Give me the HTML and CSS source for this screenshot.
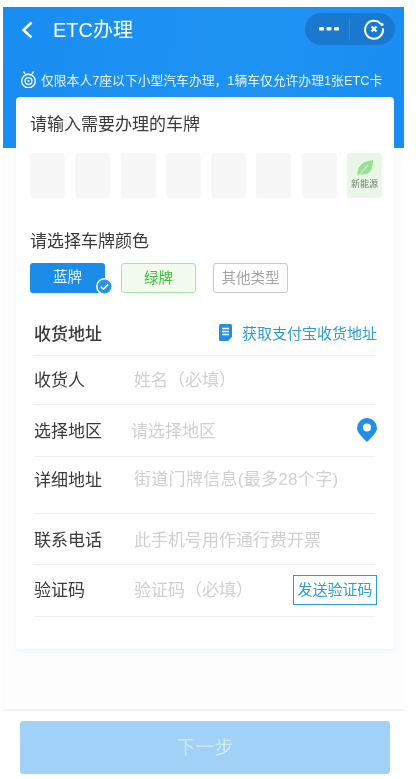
FILE: index.html
```html
<!DOCTYPE html>
<html lang="zh-CN">
<head>
  <meta charset="UTF-8">
  <meta name="viewport" content="width=device-width, initial-scale=1.0">
  <title>ETC办理</title>
  <link rel="stylesheet" href="styles.css">
</head>
<body>
  <div class="app">
    <header class="top">
      <div class="nav">
        <svg class="back" width="12" height="18" viewBox="0 0 12 18"><path d="M10.500 1.500 2.500 9l8 7.500" fill="none" stroke="#fff" stroke-width="2.400"/></svg>
        <span class="nav-title">ETC办理</span>
        <div class="capsule">
          <svg width="20" height="6" viewBox="0 0 20 6" fill="#fff"><rect x="0" y="1" width="5" height="3.600" rx="1"/><rect x="7.500" y="1" width="5" height="3.600" rx="1"/><rect x="15" y="1" width="5" height="3.600" rx="1"/></svg>
          <span class="capsule-line"></span>
          <svg width="22" height="22" viewBox="0 0 22 22" fill="none" stroke="#fff"><path d="M17.500 5.500A9 9 0 1 0 20 11" stroke-width="2" stroke-linecap="round"/><circle cx="19" cy="6.500" r="1.500" fill="#fff" stroke="none"/><path d="M8.500 8.500l5 5M13.500 8.500l-5 5" stroke-width="2"/></svg>
        </div>
      </div>
      <div class="notice">
        <svg width="17" height="18" viewBox="0 0 17 18" fill="none" stroke="#fff"><circle cx="8.500" cy="11" r="6.800" stroke-width="1.400"/><circle cx="8.500" cy="11" r="3.400" stroke-width="1.400"/><circle cx="8.500" cy="11" r="1" fill="#fff" stroke="none"/><path d="M5 4 3.500 1.500M12 4l1.500-2.500" stroke-width="1.400"/></svg>
        <span>仅限本人7座以下小型汽车办理，1辆车仅允许办理1张ETC卡</span>
      </div>
    </header>

    <main class="card">
      <h2 class="card-title">请输入需要办理的车牌</h2>
      <div class="plates">
        <div class="plate"></div>
        <div class="plate"></div>
        <div class="plate"></div>
        <div class="plate"></div>
        <div class="plate"></div>
        <div class="plate"></div>
        <div class="plate"></div>
        <div class="plate plate-new">
          <svg width="18" height="18" viewBox="0 0 18 18"><path d="M1.500 17C.5 9 5 2.500 17 1c.5 10-4 15.500-12 14.500z" fill="#9adf95"/><path d="M3 16 12 6" stroke="#e6f7e3" stroke-width="1"/></svg>
          <span>新能源</span>
        </div>
      </div>

      <h3 class="color-title">请选择车牌颜色</h3>
      <div class="chips">
        <div class="chip chip-blue">蓝牌
          <svg class="chip-check" width="17" height="17" viewBox="0 0 17 17"><circle cx="8.500" cy="8.500" r="7.700" fill="#2a93e8" stroke="#fff" stroke-width="1.400"/><path d="M4.800 8.700l2.600 2.500 4.800-4.800" fill="none" stroke="#fff" stroke-width="1.500"/></svg>
        </div>
        <div class="chip chip-green">绿牌</div>
        <div class="chip chip-gray">其他类型</div>
      </div>

      <div class="form">
        <div class="row row-head">
          <span class="head-label">收货地址</span>
          <div class="addr-link">
            <svg width="13" height="17" viewBox="0 0 13 17"><path d="M1.500 0h10A1.500 1.500 0 0 1 13 1.500V13l-4 4H1.500A1.500 1.500 0 0 1 0 15.500v-14A1.500 1.500 0 0 1 1.500 0z" fill="#1f8fe8"/><path d="M3 4.500h7M3 7.500h7M3 10.500h7" stroke="#fff" stroke-width="1.300"/></svg>
            <span>获取支付宝收货地址</span>
          </div>
        </div>
        <div class="row row-name">
          <span class="label">收货人</span>
          <span class="hint">姓名（必填）</span>
        </div>
        <div class="row row-area">
          <span class="label">选择地区</span>
          <span class="hint hint-area">请选择地区</span>
          <svg class="pin" width="20" height="24" viewBox="0 0 20 24"><path fill-rule="evenodd" d="M10 24C3.500 17.500 0 14 0 10a10 10 0 0 1 20 0c0 4-3.500 7.500-10 14zm0-10.500a4 4 0 1 0 0-8 4 4 0 0 0 0 8z" fill="#1f8fe8"/></svg>
        </div>
        <div class="row row-detail">
          <span class="label">详细地址</span>
          <span class="hint">街道门牌信息(最多28个字)</span>
        </div>
        <div class="row row-phone">
          <span class="label">联系电话</span>
          <span class="hint">此手机号用作通行费开票</span>
        </div>
        <div class="row row-code">
          <span class="label">验证码</span>
          <span class="hint">验证码（必填）</span>
          <div class="send">发送验证码</div>
        </div>
      </div>
    </main>

    <footer class="bottom">
      <div class="next">下一步</div>
    </footer>
  </div>
</body>
</html>
```
FILE: styles.css
```css
html, body {
  margin: 0;
  padding: 0;
  background: #fff;
  overflow: hidden;
}
body {
  height: 779px;
  font-family: "Liberation Sans", "Noto Sans CJK SC", sans-serif;
  color: #3a3a3a;
}
.app {
  width: 401px;
  margin: 7px 0 0 3px;
  background: #fdfdfd;
  filter: blur(0.35px);
}

/* header */
.top {
  height: 141px;
  background: linear-gradient(100deg, #1a8df2, #1f93f4 60%, #1a8df2);
  color: #fff;
}
.nav {
  display: flex;
  align-items: center;
  height: 45px;
}
.back {
  margin-left: 18px;
}
.nav-title {
  margin-left: 20px;
  font-size: 20px;
  line-height: 32px;
}
.capsule {
  display: flex;
  align-items: center;
  width: 90px;
  height: 32px;
  margin: 0 9px 1px auto;
  padding-left: 14px;
  box-sizing: border-box;
  border-radius: 16px;
  background: #1a79cf;
}
.capsule-line {
  width: 1px;
  height: 22px;
  margin: 0 13px 0 10px;
  background: #2a86d8;
}
.notice {
  display: flex;
  align-items: center;
  gap: 4px;
  height: 20px;
  margin-top: 17px;
  padding-left: 17px;
  font-size: 12.800px;
  white-space: nowrap;
  color: #e6f3ff;
}

/* card */
.card {
  position: relative;
  width: 378px;
  box-sizing: border-box;
  margin: -51px 0 0 13px;
  padding: 0 0 32px;
  background: #fff;
  border-radius: 4px;
  box-shadow: 0 3px 6px rgba(30, 140, 240, 0.06);
}
.card-title {
  margin: 0;
  height: 52px;
  padding-left: 14px;
  font-size: 17px;
  font-weight: 400;
  line-height: 56px;
}
.plates {
  display: flex;
  gap: 10.300px;
  margin: 4px 0 0 14px;
}
.plate {
  width: 35px;
  height: 45px;
  border-radius: 3px;
  background: #f7f7f7;
}
.plate-new {
  display: flex;
  flex-direction: column;
  align-items: center;
  background: #e9f7e6;
  padding-top: 6px;
  height: 39px;
}
.plate-new span {
  margin-top: 1px;
  font-size: 9px;
  line-height: 12px;
  color: #777;
  white-space: nowrap;
}
.color-title {
  margin: 32px 0 0 14px;
  font-size: 17px;
  font-weight: 400;
  line-height: 24px;
}
.chips {
  display: flex;
  gap: 16px;
  margin: 9px 0 0 14px;
}
.chip {
  position: relative;
  width: 75px;
  height: 30px;
  box-sizing: border-box;
  border-radius: 3px;
  font-size: 14.500px;
  line-height: 28px;
  text-align: center;
}
.chip-blue {
  background: #1c8ce9;
  color: #e8f4ff;
  line-height: 29px;
}
.chip-check {
  position: absolute;
  right: -8px;
  bottom: -2px;
}
.chip-green {
  background: #f3fbf1;
  border: 1px solid #a8e4a4;
  color: #3fbf3a;
}
.chip-gray {
  margin-left: 1px;
  border: 1px solid #c9c9c9;
  color: #a5a5a5;
}

/* address form */
.form {
  width: 341px;
  margin: 18px 0 0 18px;
}
.row {
  display: flex;
  align-items: center;
  box-sizing: border-box;
  border-bottom: 1px solid #efefef;
}
.row-head {
  justify-content: space-between;
  height: 45px;
  padding-bottom: 2px;
}
.row-name {
  height: 49px;
  padding-top: 2px;
}
.row-area {
  height: 52px;
  padding-top: 2px;
}
.row-detail {
  align-items: flex-start;
  height: 57px;
  padding-top: 12px;
}
.row-phone {
  height: 51px;
  padding-top: 4px;
}
.row-code {
  height: 52px;
}
.head-label {
  font-size: 17px;
  font-weight: 500;
}
.addr-link {
  display: flex;
  align-items: center;
  gap: 10px;
  margin-right: -2px;
  font-size: 15px;
  color: #2e9ad8;
}
.label {
  width: 100px;
  flex: none;
  font-size: 17px;
  line-height: 24px;
}
.hint {
  font-size: 17px;
  line-height: 24px;
  color: #d0d0d0;
  white-space: nowrap;
}
.row-detail .hint {
  margin-top: -1px;
  letter-spacing: 0.3px;
}
.hint-area {
  margin-left: -3px;
}
.pin {
  margin: 0 -2px 3px auto;
}
.send {
  width: 84px;
  height: 30px;
  box-sizing: border-box;
  margin: 0 -2px 2px auto;
  border: 1px solid #2e9ad8;
  font-size: 15px;
  line-height: 28px;
  text-align: center;
  color: #2e9ad8;
}

/* footer */
.bottom {
  margin-top: 60px;
  padding: 10px 14px 0 17px;
  border-top: 2px solid #f3f3f3;
  background: #fff;
}
.next {
  height: 53px;
  border-radius: 3px;
  background: #a2d1f8;
  color: #cfe7fb;
  font-size: 19px;
  line-height: 53px;
  text-align: center;
}
```
